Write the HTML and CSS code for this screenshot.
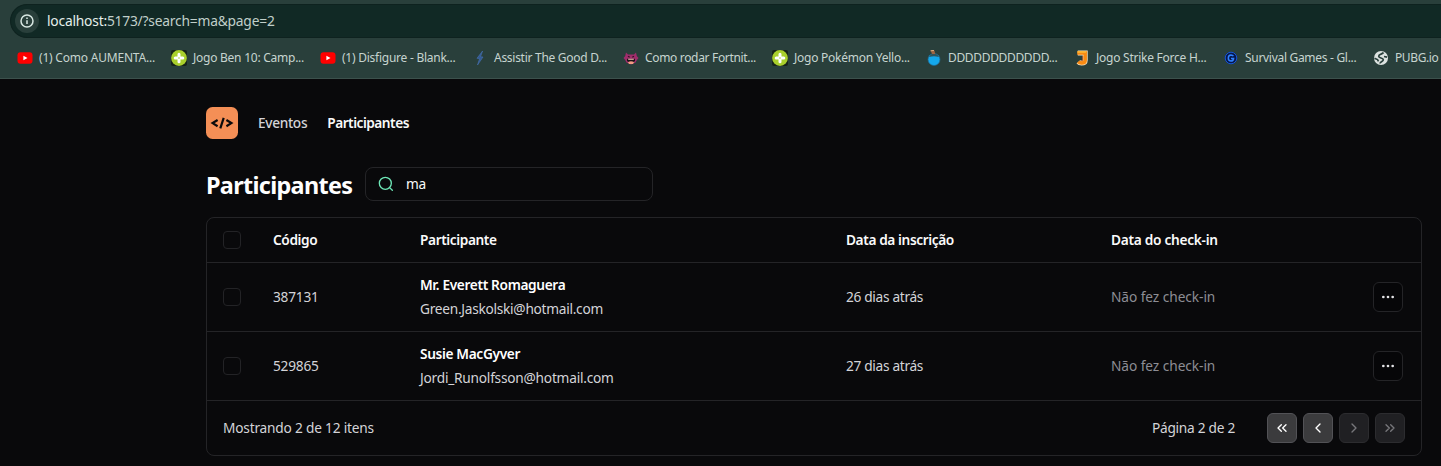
FILE: index.html
```html
<!DOCTYPE html>
<html lang="pt-BR">
<head>
<meta charset="utf-8">
<title>Participantes</title>
<link rel="stylesheet" href="styles.css">
</head>
<body>
<svg class="defs" width="0" height="0">
  <symbol id="youtube" viewBox="0 0 16 16"><rect x="0.5" y="2.3" width="15" height="11.4" rx="3" fill="#f00"/><path d="M6.4 5.7v4.6L10.5 8z" fill="#fff"/></symbol>
  <symbol id="plus" viewBox="0 0 16 16"><rect width="16" height="16" rx="2" fill="#17231a"/><circle cx="8" cy="8" r="7.9" fill="#a9cf2c"/><path d="M8 4.2v7.6M4.2 8h7.6" stroke="#fff" stroke-width="3" stroke-linecap="round"/><circle cx="8" cy="8" r=".8" fill="#a9cf2c"/></symbol>
  <symbol id="dots" viewBox="0 0 24 24"><g fill="currentColor"><circle cx="5" cy="12" r="2"/><circle cx="12" cy="12" r="2"/><circle cx="19" cy="12" r="2"/></g></symbol>
</svg>

<header class="browser">
  <div class="address">
    <span class="info"><svg width="16" height="16" viewBox="0 0 16 16" fill="none" stroke="#d9e8e3" stroke-width="1.5"><circle cx="8" cy="8" r="6"/><path d="M8 7.2v3.8M8 4.6v1.5"/></svg></span>
    <span class="url"><b>localhost:</b>5173/?search=ma&amp;page=2</span>
  </div>
  <nav class="bookmarks">
    <a class="mark m1"><svg><use href="#youtube"/></svg><span>(1) Como AUMENTA...</span></a>
    <a class="mark m2"><svg><use href="#plus"/></svg><span>Jogo Ben 10: Camp...</span></a>
    <a class="mark m3"><svg><use href="#youtube"/></svg><span>(1) Disfigure - Blank...</span></a>
    <a class="mark m4"><svg viewBox="0 0 16 16"><path d="M10.6 1 5 8.3 7.6 8.6 5.5 15 11 7 8.5 6.8z" fill="#345a92" stroke="#4772b4" stroke-width=".6"/></svg><span>Assistir The Good D...</span></a>
    <a class="mark m5"><svg viewBox="0 0 16 16"><path d="M3 2.5 5 4.500h6l2-2 .8 3.500L15.500 8l-1.600 2-1.400 2.500L8 14.400 3.500 12.500 2.200 10 .5 8l1.700-2z" fill="#a02c6c"/><path d="M5 6.300 6.700 7.300M11 6.300 9.300 7.300" stroke="#301725" stroke-width="1.300"/><path d="M4 8.700h8v1.800l-1 1.500H5l-1-1.500z" fill="#1c1218"/><path d="M5.200 8.700h5.600v1.100H5.200z" fill="#e8b6ac"/><path d="M5 12q3-1.500 6 0l-1 2H6z" fill="#f49b83"/></svg><span>Como rodar Fortnit...</span></a>
    <a class="mark m6"><svg><use href="#plus"/></svg><span>Jogo Pokémon Yello...</span></a>
    <a class="mark m7"><svg viewBox="0 0 16 16"><circle cx="8" cy="9.5" r="6" fill="#14a8ec" stroke="#226a91" stroke-width=".7"/><path d="M3.1 7Q8 5.5 12.900 7 11.500 3.500 8 3.500T3.100 7" fill="#31545c"/><path d="M4.800.8h3.700l.7 3.200H6z" fill="#9d6543"/><path d="m4.500.8 3.500-.4" stroke="#e1ad7e"/></svg><span>DDDDDDDDDDDD...</span></a>
    <a class="mark m8"><svg viewBox="0 0 16 16" fill="none"><path d="M3.800 3h7.400v7.200q0 2.800-3.600 2.800-2.200 0-3.200-1.200" stroke="#f8e3bd" stroke-width="5"/><path d="M3.300 3h7.900v7.200q0 2.800-3.600 2.800-2.200 0-3.400-1.200" stroke="#f98a12" stroke-width="3.500"/><path d="M3.400 2h8.500" stroke="#ffc43c" stroke-width="1.300"/><path d="M8.700 5.800v4.700l-1.600.3" stroke="#b84a18" stroke-width=".7"/></svg><span>Jogo Strike Force H...</span></a>
    <a class="mark m9"><svg viewBox="0 0 16 16"><circle cx="8" cy="8" r="5.800" fill="#07174c" stroke="#1454d8"/><path d="M10.400 6.200Q9.600 4.900 8 4.900 5.300 5 5.300 8T8 11.100q2.400 0 2.600-2.700H8" fill="none" stroke="#2f83ff" stroke-width="1.500"/></svg><span>Survival Games - Gl...</span></a>
    <a class="mark m10"><svg viewBox="0 0 16 16"><circle cx="8" cy="8" r="7" fill="#dce2e0"/><path d="M10.500 2.500C9.500 4.500 5.700 3.800 5.700 6.200c0 2.300 4.600 1.200 4.600 3.600 0 1.700-3 1.600-3.300 3.700M1.500 8.200l3 1.400 1 1.800M14 7.200l-3-.7" fill="none" stroke="#293f3b" stroke-width="1.700"/></svg><span>PUBG.io</span></a>
  </nav>
</header>

<main class="page">
  <div class="topnav">
    <svg class="logo" width="32" height="32" viewBox="0 0 32 32"><rect width="32" height="32" rx="6.5" fill="#f48f56"/><path d="M11.600 13 6.600 16.100l5 3.100M20.400 13l5 3.100-5 3.100M17.700 10.800l-3.400 10.600" fill="none" stroke="#0b0b0c" stroke-width="2.200"/></svg>
    <a class="link">Eventos</a>
    <a class="link active">Participantes</a>
  </div>

  <div class="heading">
    <h1>Participantes</h1>
    <label class="search">
      <svg width="16" height="16" viewBox="0 0 24 24" fill="none" stroke="#6ee7b7" stroke-width="2" stroke-linecap="round"><circle cx="11" cy="11" r="9"/><path d="m21.5 21.5-4.100-4.100"/></svg>
      <span>ma</span>
    </label>
  </div>

  <section class="panel">
    <div class="row head">
      <i class="check"></i><b>Código</b><b>Participante</b><b>Data da inscrição</b><b class="wide">Data do check-in</b>
    </div>
    <div class="row">
      <i class="check"></i><span class="code">387131</span>
      <div class="person"><b>Mr. Everett Romaguera</b><span>Green.Jaskolski@hotmail.com</span></div>
      <span>26 dias atrás</span><span class="muted">Não fez check-in</span>
      <button class="more"><svg width="16" height="16"><use href="#dots"/></svg></button>
    </div>
    <div class="row">
      <i class="check"></i><span class="code">529865</span>
      <div class="person"><b>Susie MacGyver</b><span class="long">Jordi_Runolfsson@hotmail.com</span></div>
      <span>27 dias atrás</span><span class="muted">Não fez check-in</span>
      <button class="more"><svg width="16" height="16"><use href="#dots"/></svg></button>
    </div>
    <footer class="foot">
      <span class="total">Mostrando 2 de 12 itens</span>
      <div class="pager">
        <span>Página 2 de 2</span>
        <div class="buttons">
          <button class="nav"><svg viewBox="0 0 24 24"><path d="m11 17-5-5 5-5M18 17l-5-5 5-5"/></svg></button>
          <button class="nav"><svg viewBox="0 0 24 24"><path d="m15 18-6-6 6-6"/></svg></button>
          <button class="nav off"><svg viewBox="0 0 24 24"><path d="m9 18 6-6-6-6"/></svg></button>
          <button class="nav off"><svg viewBox="0 0 24 24"><path d="m6 17 5-5-5-5M13 17l5-5-5-5"/></svg></button>
        </div>
      </div>
    </footer>
  </section>
</main>
</body>
</html>
```
FILE: styles.css
```css
* { box-sizing: border-box; }
body {
  margin: 0;
  height: 466px;
  overflow: hidden;
  background: #09090b;
  color: #d4d4d8;
  font: 13.7px/24px "Noto Sans", "Open Sans", sans-serif;
  letter-spacing: -0.27px;
  white-space: nowrap;
}
b { font-weight: 600; letter-spacing: -0.35px; }
.defs { position: absolute; }

.browser {
  height: 79px;
  padding: 4px 0 0 10px;
  background: #293f3b;
  border-bottom: 1px solid #3c514c;
}
.address {
  display: flex;
  align-items: center;
  gap: 9px;
  height: 34px;
  padding-left: 4px;
  border: 1px solid #0e221f;
  border-right: 0;
  border-radius: 17px 0 0 17px;
  background: #112925;
}
.info {
  display: grid;
  place-items: center;
  width: 24px;
  height: 24px;
  border-radius: 50%;
  background: #293f3b;
}
.url { color: #c0cfca; font-size: 13.8px; margin-left: -1px; letter-spacing: -0.21px; }
.url b { color: #e5efeb; font-weight: 400; letter-spacing: inherit; }
.bookmarks {
  display: grid;
  grid-template-columns: 154px 149px 152px 151px 149px 154px 148px 149px 150px 70px;
  height: 40px;
  padding-left: 7px;
}
.mark {
  display: flex;
  align-items: center;
  gap: 6px;
  color: #c6d4cf;
  font-size: 12px;
  letter-spacing: -0.3px;
}
.mark svg { width: 16px; height: 16px; flex: none; }
.m1 { letter-spacing: -0.21px; }
.m2, .m3, .m6, .m8 { letter-spacing: -0.25px; }
.m7 { letter-spacing: -0.33px; }
.m4 { letter-spacing: -0.28px; }
.m5 { letter-spacing: -0.33px; }
.m10 { letter-spacing: -0.4px; }

.page { width: 1216px; margin-left: 206px; padding-top: 28px; }
.topnav { display: flex; align-items: center; gap: 20px; height: 32px; }
.link { color: #d4d4d8; font-weight: 500; letter-spacing: -0.33px; }
.active { color: #fafafa; font-weight: 600; letter-spacing: -0.5px; }
.heading { display: flex; align-items: center; gap: 12px; height: 34px; margin-top: 28px; }
h1 { width: 147px; margin: 2px 0 0; font-size: 23.4px; line-height: 32px; font-weight: 700; letter-spacing: -0.67px; color: #fff; }
.search {
  display: flex;
  align-items: center;
  gap: 12px;
  width: 288px;
  height: 34px;
  padding-left: 12px;
  border: 1px solid #242427;
  border-radius: 8px;
  color: #fafafa;
}

.panel { margin-top: 16px; border: 1px solid #242427; border-radius: 8px; }
.row {
  display: grid;
  grid-template-columns: 50px 147px 426px 265px 262px 48px;
  align-items: center;
  height: 69px;
  padding-left: 16px;
  border-bottom: 1px solid #242427;
}
.head { height: 45px; }
.head b { color: #fafafa; letter-spacing: -0.4px; }
.head .wide { letter-spacing: -0.28px; }
.check { width: 18px; height: 18px; border: 1px solid #232326; border-radius: 4px; }
.person { display: grid; }
.person b { color: #fff; }
.long { letter-spacing: -0.23px; }
.row > span { letter-spacing: -0.32px; }
.row > .muted { color: #8d8d94; letter-spacing: -0.06px; }
.row > .code { letter-spacing: -0.22px; }
button { display: grid; place-items: center; width: 30px; height: 30px; padding: 0; border-radius: 6px; }
.more { border: 1px solid #242427; background: #060608; color: #e4e4e7; }
.foot { display: flex; align-items: center; justify-content: space-between; height: 54px; padding: 0 16px; }
.total { letter-spacing: -0.2px; }
.pager { display: flex; align-items: center; gap: 32px; }
.buttons { display: flex; gap: 6px; }
.nav { border: 1px solid #525256; background: #3b3b3d; color: #fff; }
.nav svg { width: 16px; height: 16px; fill: none; stroke: currentColor; stroke-width: 2; stroke-linecap: round; stroke-linejoin: round; }
.off { border-color: #2c2c2f; background: #202023; color: #77777b; }
```
